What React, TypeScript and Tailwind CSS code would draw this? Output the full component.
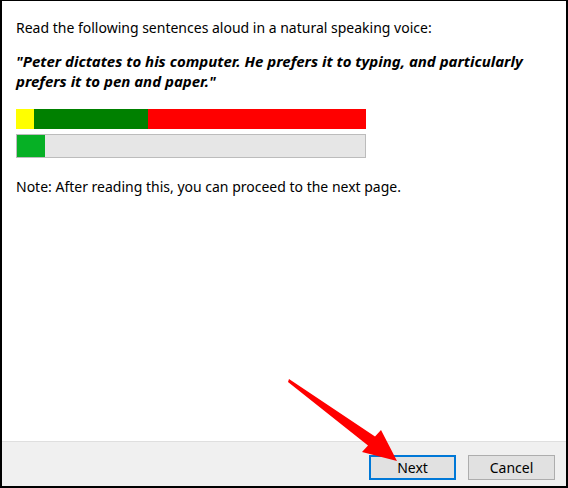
import React from 'react'

// --- Pointer arrow (screenshot annotation) ---

function PointerArrow() {
  return (
    <svg
      className="absolute left-0 top-0 pointer-events-none"
      width="568"
      height="488"
      viewBox="0 0 568 488"
    >
      <polygon
        points="287,378 373,435.5 379,429 395,460 360,451 366,444.5 286,381"
        fill="#ff0000"
      />
    </svg>
  )
}

// --- Level meter ---

function LevelMeter() {
  return (
    <div className="flex flex-col gap-[5px] w-[350px]">
      <div className="flex h-[20px]">
        <div className="w-[18px] bg-[#ffff00]" />
        <div className="w-[114px] bg-[#008000]" />
        <div className="flex-1 bg-[#ff0000]" />
      </div>
      <div className="h-[24px] border border-[#bcbcbc] bg-[#e6e6e6] flex">
        <div className="w-[28px] bg-[#06b025]" />
      </div>
    </div>
  )
}

// --- Buttons ---

function DialogButton({ label, primary }: { label: string; primary?: boolean }) {
  return (
    <button
      className={`w-[87px] h-[25px] bg-[#e1e1e1] text-[14px] leading-[18px] text-black ${
        primary ? 'border-2 border-[#0078d7]' : 'border border-[#adadad]'
      }`}
    >
      {label}
    </button>
  )
}

export default function App() {
  return (
    <div
      className="relative w-[568px] h-[488px] flex flex-col border-black border-l-2 border-r-2 border-t border-b-2 bg-white text-black"
      style={{ fontFamily: '"Noto Sans", "Open Sans", sans-serif' }}
    >
      <div className="flex-1 pl-[14px] pt-[17px]">
        <p className="text-[14px] leading-[20px]">
          Read the following sentences aloud in a natural speaking voice:
        </p>
        <p className="mt-[13px] text-[15px] leading-[20px] font-bold italic pr-[20px]">
          "Peter dictates to his computer. He prefers it to typing, and particularly prefers
          it to pen and paper."
        </p>
        <div className="mt-[18px]">
          <LevelMeter />
        </div>
        <p className="mt-[19px] text-[14px] leading-[20px]">
          Note: After reading this, you can proceed to the next page.
        </p>
      </div>
      <div className="h-[45px] border-t border-[#dfdfdf] bg-[#f0f0f0] flex items-start justify-end gap-[12px] pt-[13px] pr-[11px]">
        <DialogButton label="Next" primary />
        <DialogButton label="Cancel" />
      </div>
      <PointerArrow />
    </div>
  )
}
